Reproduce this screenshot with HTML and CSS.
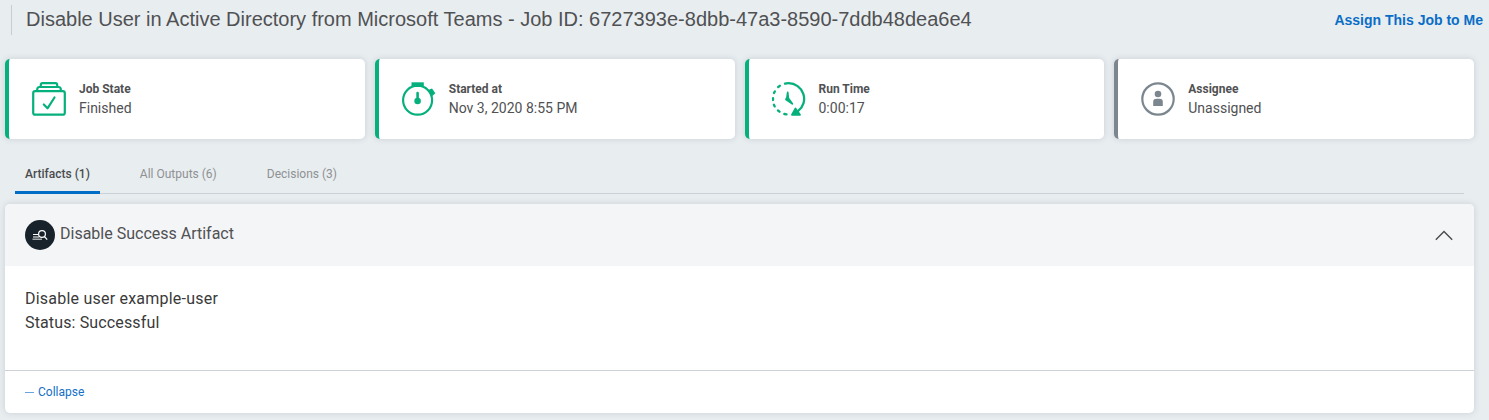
FILE: index.html
```html
<!DOCTYPE html>
<html lang="en">
<head>
<meta charset="utf-8">
<title>Job details</title>
<link rel="stylesheet" href="styles.css">
</head>
<body>
<header class="topbar">
  <h1 class="title">Disable User in Active Directory from Microsoft Teams - Job ID: 6727393e-8dbb-47a3-8590-7ddb48dea6e4</h1>
  <a class="assign">Assign This Job to Me</a>
</header>
<main class="content">
  <section class="cards">
    <div class="card">
      <svg class="icon" viewBox="0 0 34 34" fill="none" stroke="currentColor" stroke-width="2.200" stroke-linecap="round" stroke-linejoin="round">
        <rect x="1.200" y="9.200" width="31.600" height="23.500" rx="2"/>
        <path d="M5.200 8.500V7.500Q5.200 5 7.500 5H26.500Q28.800 5 28.800 7.500V8.500M8.800 4.500V3Q8.800 1.100 10.500 1.100H23.500Q25.200 1.100 25.200 3V4.500"/>
        <path d="M11.800 22.500L15.500 26.300L22.500 15.500"/>
      </svg>
      <div class="info"><div class="label">Job State</div><div class="value">Finished</div></div>
    </div>
    <div class="card">
      <svg class="icon" viewBox="0 0 34 34" fill="none" stroke="currentColor" stroke-width="2.200">
        <circle cx="15.600" cy="18.200" r="14.500"/>
        <path d="M9.500 0.300H21.800V5H9.500Z" fill="currentColor" stroke="none"/>
        <path d="M25.500 8.200L30 6.500L33.400 11.200L30 14.200Z" fill="currentColor" stroke="none"/>
        <circle cx="15.600" cy="19" r="3.300" fill="currentColor" stroke="none"/>
        <path d="M15.600 11V19" stroke-width="2.600" stroke-linecap="round"/>
      </svg>
      <div class="info"><div class="label">Started at</div><div class="value">Nov 3, 2020 8:55 PM</div></div>
    </div>
    <div class="card">
      <svg class="icon" viewBox="0 0 34 34" fill="none" stroke="currentColor" stroke-width="2.300" stroke-linecap="round">
        <path d="M13 1.700Q14.500 1.200 16.500 1.200A15.600 15.600 0 0 1 26 29.200"/>
        <path d="M7.800 3.800L6.200 5M2.800 9.400L2 11M1 16.200V18M1.900 22.800L2.700 24.400M6 28.500L7.500 29.700M12.300 32L14.500 32.400"/>
        <path d="M20 32.800L23.500 26.500L28 32.800Z" fill="currentColor" stroke-width="1.800" stroke-linejoin="round"/>
        <path d="M15.700 10.500L16.300 16.300L20.300 21.800L15.500 18.600L14 17.500L15 15.500Z" fill="currentColor" stroke-width="1.800" stroke-linejoin="round"/>
      </svg>
      <div class="info"><div class="label">Run Time</div><div class="value">0:00:17</div></div>
    </div>
    <div class="card card-muted">
      <svg class="icon" viewBox="0 0 34 34">
        <circle cx="17" cy="17" r="15.700" fill="none" stroke="currentColor" stroke-width="2.200"/>
        <circle cx="17" cy="12" r="3.300" fill="currentColor"/>
        <path d="M12.200 24V20Q12.200 16.800 15.400 16.800H18.600Q21.800 16.800 21.800 20V24Z" fill="currentColor"/>
      </svg>
      <div class="info"><div class="label">Assignee</div><div class="value">Unassigned</div></div>
    </div>
  </section>
  <nav class="tabs">
    <a class="tab tab-active">Artifacts (1)</a>
    <a class="tab">All Outputs (6)</a>
    <a class="tab">Decisions (3)</a>
  </nav>
  <section class="panel">
    <div class="panel-head">
      <svg class="badge" viewBox="0 0 30 30" fill="none" stroke="#fff">
        <circle cx="15" cy="15" r="15" fill="#18222b" stroke="none"/>
        <path d="M8 14.500H13M8 17H14" stroke-width="1"/>
        <path d="M7.500 19.300H17" stroke-width="1.500" stroke="#a3a7aa"/>
        <circle cx="17" cy="14" r="3.400" stroke-width="1.200"/>
        <path d="M19.400 16.500L22.200 19.600" stroke-width="1.200"/>
      </svg>
      <h2 class="panel-title">Disable Success Artifact</h2>
      <svg class="chevron" viewBox="0 0 18 10" fill="none" stroke="#4a4b4d" stroke-width="1.400"><path d="M0.800 9.700L9 1.500L17.200 9.700"/></svg>
    </div>
    <div class="panel-body"><div class="line-one">Disable user example-user</div><div class="line-two">Status: Successful</div></div>
    <div class="panel-foot"><span class="dash"></span><a class="collapse">Collapse</a></div>
  </section>
</main>
</body>
</html>
```
FILE: styles.css
```css
* { box-sizing: border-box; }
body {
  margin: 0;
  height: 420px;
  overflow: hidden;
  background: #e8edf0;
  color: #505153;
  font-family: Roboto, sans-serif;
}
.topbar {
  height: 59px;
  padding: 5px 6px 0 11px;
  display: flex;
  align-items: flex-start;
  justify-content: space-between;
  font-family: "Liberation Sans", Arial, sans-serif;
}
.title {
  margin: 0;
  height: 30px;
  padding-left: 14px;
  border-left: 1px solid #c8cdd1;
  font-size: 20px;
  font-weight: 400;
  line-height: 29px;
  white-space: nowrap;
}
.assign {
  color: #0a6ec7;
  font-size: 14px;
  font-weight: 700;
  line-height: 30px;
}
.content { padding: 0 15px 0 5px; }
.cards {
  display: grid;
  grid-template-columns: repeat(4, 1fr);
  gap: 10px;
}
.card {
  height: 80px;
  display: flex;
  align-items: center;
  gap: 13px;
  padding-left: 23px;
  background: #fff;
  border-left: 4px solid #06b07c;
  border-radius: 5px;
  box-shadow: 0 0 6px rgba(40, 60, 70, 0.17);
  color: #06b07c;
}
.card-muted { border-color: #7b868f; color: #7b868f; }
.icon { width: 34px; height: 34px; }
.info { color: #505153; }
.label { font-size: 12px; font-weight: 700; line-height: 18px; }
.value { font-size: 14px; line-height: 20px; }
.tabs {
  display: flex;
  gap: 30px;
  margin: 15px 10px 10px;
  height: 40px;
  border-bottom: 1px solid #cbd2d7;
}
.tab {
  height: 40px;
  padding: 0 10px;
  font-size: 12px;
  line-height: 41px;
  color: #8f9193;
}
.tab-active {
  color: #4a4b4d;
  font-weight: 500;
  border-bottom: 3px solid #006cc6;
}
.panel {
  height: 209px;
  background: #fff;
  border-radius: 5px;
  box-shadow: 0 0 6px rgba(40, 60, 70, 0.17);
  overflow: hidden;
}
.panel-head {
  height: 62px;
  padding: 0 21px 0 20px;
  display: flex;
  align-items: center;
  gap: 5px;
  background: #f4f5f7;
}
.badge { width: 30px; height: 30px; }
.panel-title {
  margin: 0 auto 3px 0;
  font-size: 16px;
  font-weight: 400;
  line-height: 20px;
}
.chevron { width: 18px; height: 10px; overflow: visible; }
.panel-body {
  height: 104px;
  padding: 21px 20px;
  color: #3a3a3a;
  font-size: 16px;
  line-height: 24px;
}
.line-one { letter-spacing: 0.22px; }
.line-two { letter-spacing: 0.14px; }
.panel-foot {
  height: 43px;
  padding: 0 20px;
  display: flex;
  align-items: center;
  gap: 4px;
  border-top: 1px solid #ccd2d7;
}
.dash { width: 9px; height: 1px; background: #69a4dc; }
.collapse { color: #1470c8; font-size: 12px; }
```
